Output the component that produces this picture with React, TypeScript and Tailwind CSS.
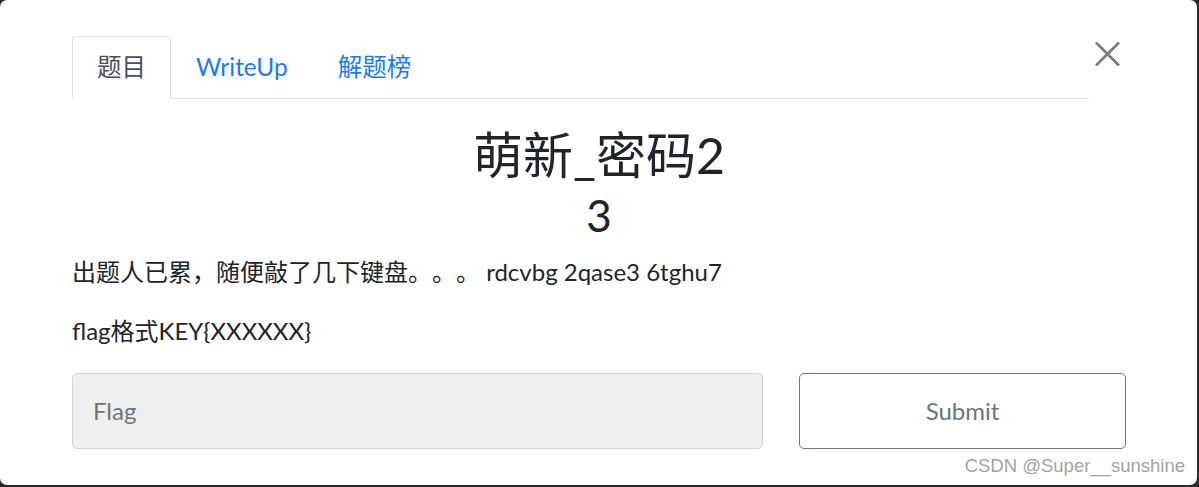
import React from "react";

export default function App() {
  return (
    <div className="w-[1199px] h-[487px] bg-[#2a2a2a] overflow-hidden">
      <div
        className="relative w-[1197px] h-[485px] bg-white rounded-[7px] pl-[72px] pr-[71px] pt-[36px] text-[#212529] [text-spacing-trim:space-all]"
        style={{ fontFamily: "Lato, 'Noto Sans CJK SC', sans-serif" }}
      >
        <div className="flex items-start">
          <div className="flex flex-1 border-b border-[#dee2e6]">
            <div className="-mb-px px-[24px] py-[12px] text-[24.5px] leading-[36px] text-[#495057] bg-white border border-[#dee2e6] border-b-white rounded-t-[4px]">
              题目
            </div>
            <div className="px-[24px] py-[12px] text-[24.5px] leading-[36px] text-[#1a7bf2] border border-transparent">
              WriteUp
            </div>
            <div className="px-[24px] py-[12px] text-[24.5px] leading-[36px] text-[#1a7bf2] border border-transparent">
              解题榜
            </div>
          </div>
          <button className="ml-[6px] mr-[6px] mt-[6px] w-[25px] h-[24px] flex items-center justify-center">
            <svg width="25" height="24" viewBox="0 0 25 24">
              <path d="M1 0.5 L24 23.5 M24 0.5 L1 23.5" stroke="#7d7d7d" strokeWidth="2.8" fill="none" />
            </svg>
          </button>
        </div>

        <h2 className="mt-[26px] text-center text-[50px] leading-[60px] font-normal">萌新_密码2</h2>
        <h3 className="mt-[3px] text-center text-[44px] leading-[54px] font-normal">3</h3>

        <p className="mt-[15px] text-[24px] leading-[30px]">
          出题人已累，随便敲了几下键盘。。。 rdcvbg 2qase3 6tghu7
        </p>
        <p className="mt-[29px] text-[24px] leading-[30px]">flag格式KEY{"{XXXXXX}"}</p>

        <div className="mt-[27px] flex gap-[36px]">
          <div className="w-[691px] h-[76px] bg-[#efefef] border border-[#ced4da] rounded-[5px] flex items-center px-[20px] text-[24px] text-[#6c757d]">
            Flag
          </div>
          <button className="flex-1 h-[76px] border border-[#6c757d] rounded-[5px] text-[24px] text-[#6c757d] bg-white">
            Submit
          </button>
        </div>

        <div
          className="absolute right-[12px] bottom-[10px] text-[18.5px] leading-none text-[#a3a3a3]"
          style={{ fontFamily: "'Liberation Sans', Arial, sans-serif" }}
        >
          CSDN @Super__sunshine
        </div>
      </div>
    </div>
  );
}
